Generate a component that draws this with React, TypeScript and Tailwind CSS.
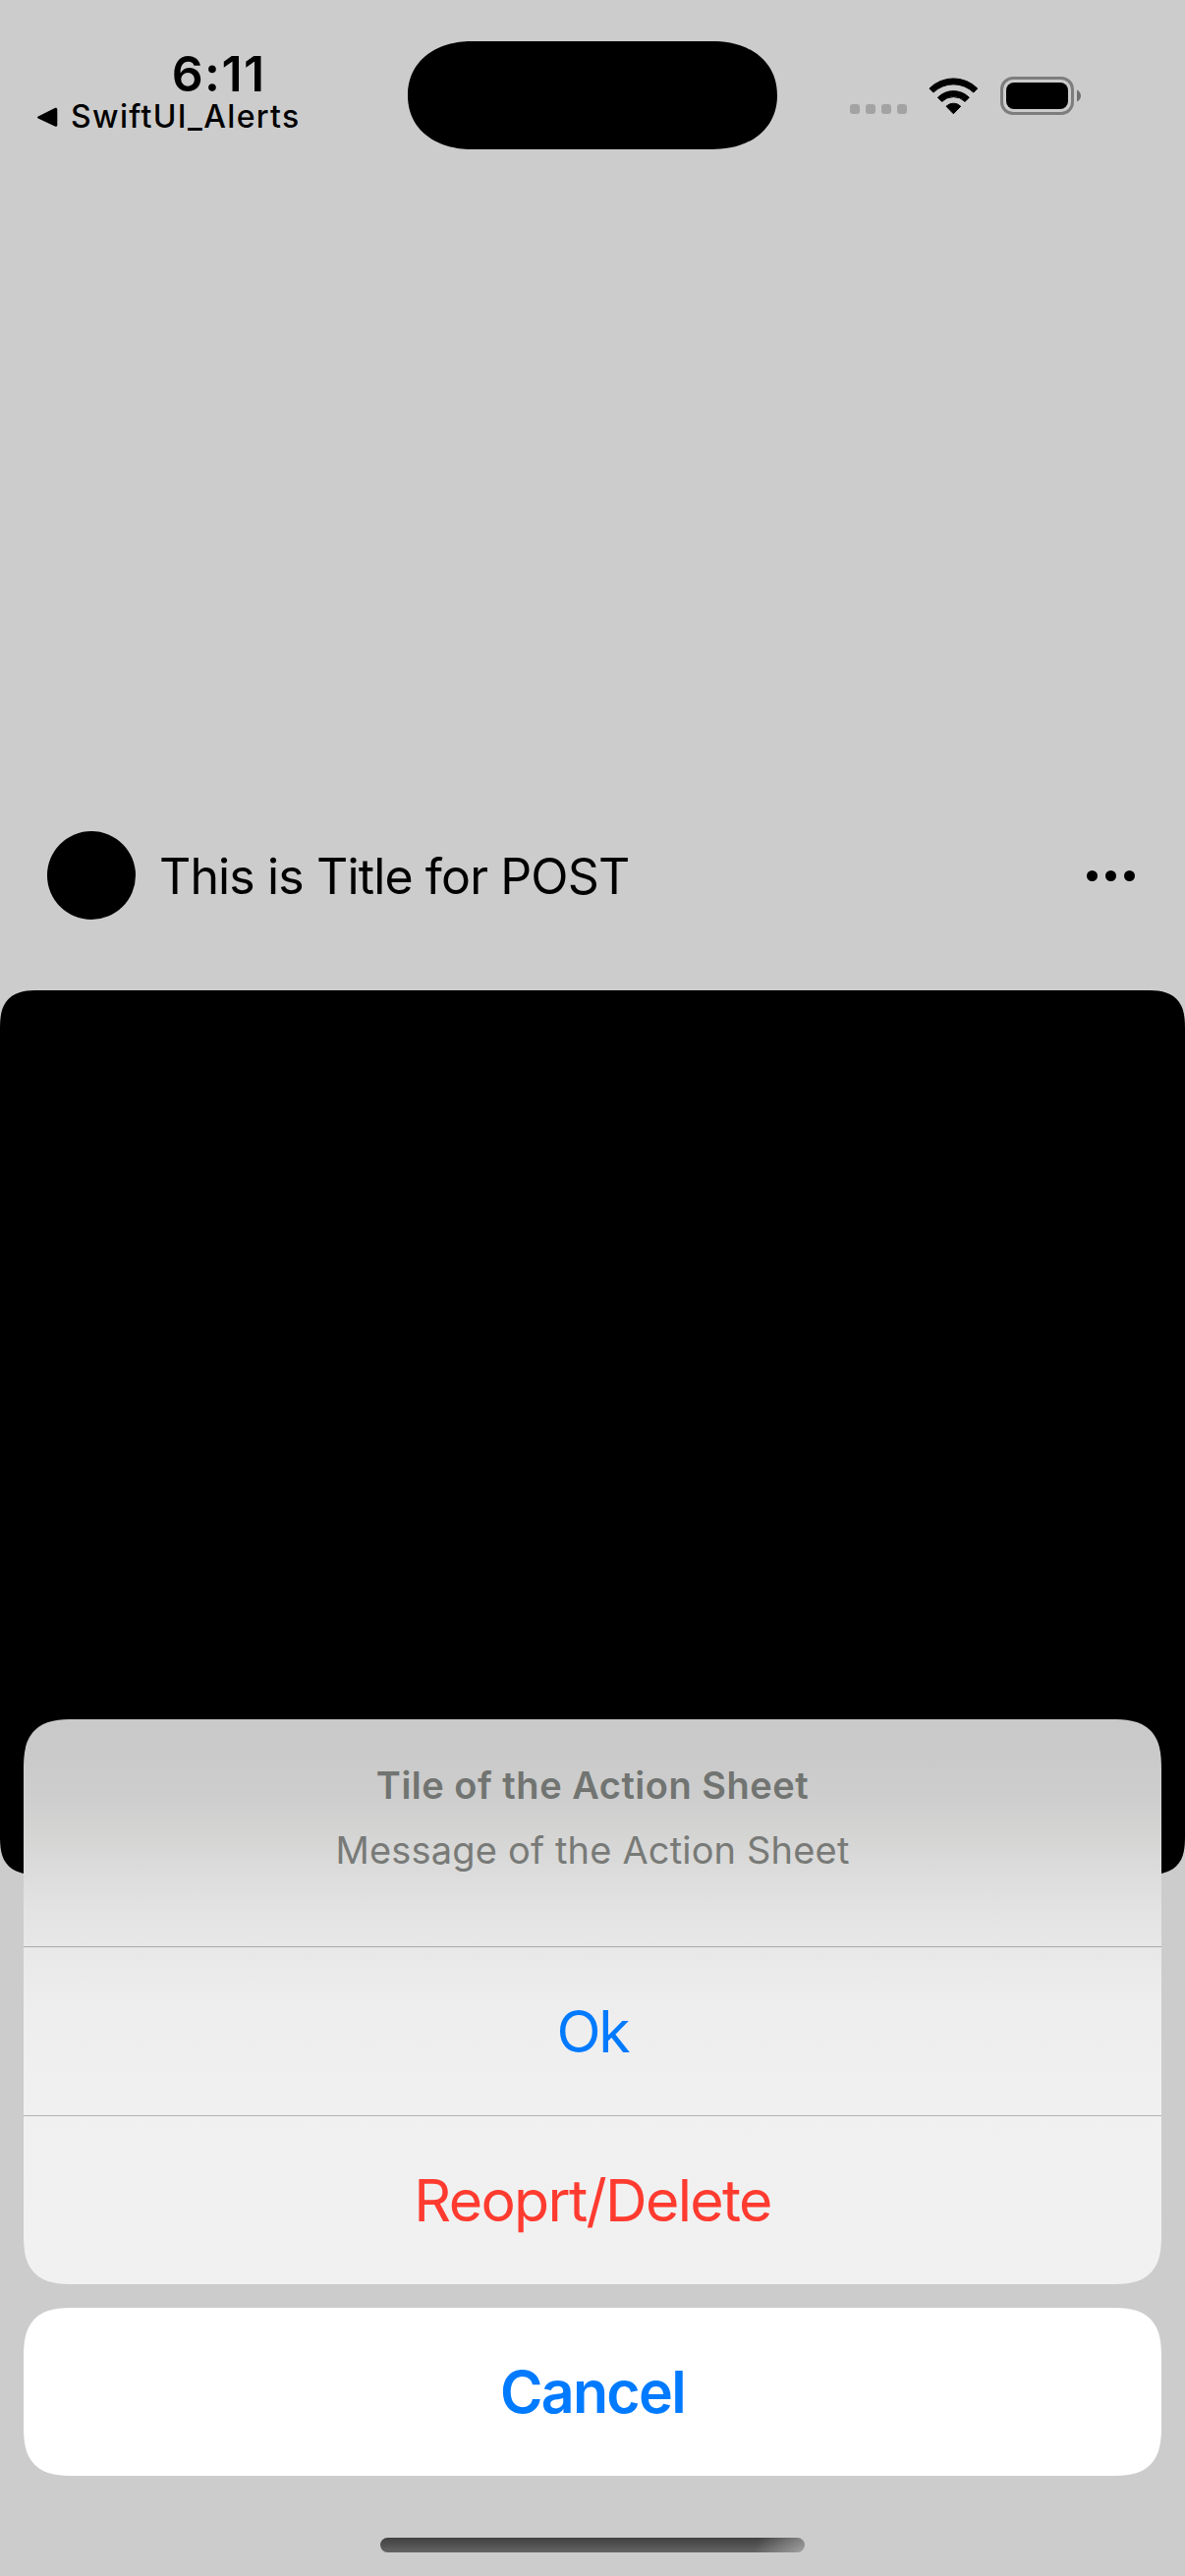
function BackTriangle() {
  return (
    <svg viewBox="0 0 21 21" className="h-[21px] w-[21px]" aria-hidden="true">
      <path
        d="M.8 9.4 17.8 1C19 .4 20.3 1 20.3 2.4v15.8c0 1.4-1.3 2-2.5 1.4L.8 11.6c-1-.5-1-1.7 0-2.2Z"
        fill="black"
      />
    </svg>
  );
}

function CellularDots() {
  return (
    <div className="flex gap-1.5 pt-[17px]">
      <span className="size-2.5 rounded-[3px] bg-[#a3a3a3]" />
      <span className="size-2.5 rounded-[3px] bg-[#a3a3a3]" />
      <span className="size-2.5 rounded-[3px] bg-[#a3a3a3]" />
      <span className="size-2.5 rounded-[3px] bg-[#a3a3a3]" />
    </div>
  );
}

function WifiIcon() {
  return (
    <svg viewBox="0 0 51 38" className="h-[38px] w-[51px]" aria-hidden="true">
      <g fill="black" stroke="black" strokeWidth="1" strokeLinejoin="round">
        <path d="M.9 11.1A34.4 34.4 0 0 1 49.8 11.1L45.8 15.1A29.5 29.5 0 0 0 4.9 15.1Z" />
        <path d="M9.4 20.2A22.6 22.6 0 0 1 41.3 20.2L37.1 24.4A16.8 16.8 0 0 0 13.6 24.4Z" />
        <path d="M18 29.2A10.4 10.4 0 0 1 32.7 29.2L25.35 36.8Z" />
      </g>
    </svg>
  );
}

function BatteryIcon() {
  return (
    <svg viewBox="0 0 83 39" className="h-[39px] w-[83px]" aria-hidden="true">
      <rect x="1.5" y="1.5" width="72" height="36" rx="11.5" fill="none" stroke="#7d7d7d" strokeWidth="3" />
      <rect x="6" y="6" width="63" height="27" rx="8" fill="black" />
      <path d="M78 13.4c2.4 1 4 3.4 4 6.1s-1.6 5.1-4 6.1Z" fill="#707070" />
    </svg>
  );
}

function StatusBar() {
  return (
    <header className="flex h-[160px] items-start">
      <div className="w-[414.5px] pt-[55px]">
        <p className="pl-[174.7px] text-[50px] leading-10 font-semibold tracking-[1.41px]">6:11</p>
        <div className="mt-1 flex h-10 items-center pl-[38px]">
          <BackTriangle />
          <span className="ml-[13px] text-[32px] leading-10 font-medium tracking-[1.34px]">SwiftUI_Alerts</span>
        </div>
      </div>
      <div className="mt-[41.5px] h-[110.5px] w-[376.5px] rounded-[66px/55px] bg-black [corner-shape:superellipse(1.12)]" />
      <div className="ml-[74px] flex items-start pt-[78px]">
        <div className="pt-[11px]">
          <CellularDots />
        </div>
        <div className="ml-[22px] pt-px">
          <WifiIcon />
        </div>
        <div className="ml-[22px]">
          <BatteryIcon />
        </div>
      </div>
    </header>
  );
}

function Post() {
  return (
    <main className="pt-[686px]">
      <div className="flex h-[90px] items-center px-12">
        <div className="size-[90px] rounded-full bg-black" />
        <h1 className="ml-6 pt-[2px] text-[50px] leading-[60px] tracking-[-0.87px]">This is Title for POST</h1>
        <button className="mr-[3.5px] ml-auto flex gap-[7.8px] pt-px" aria-label="More">
          <span className="size-[11px] rounded-full bg-black" />
          <span className="size-[11px] rounded-full bg-black" />
          <span className="size-[11px] rounded-full bg-black" />
        </button>
      </div>
      <div className="mt-[72px] h-[900px] rounded-[40px] bg-black [corner-shape:superellipse(1.5)]" />
    </main>
  );
}

function ActionSheet() {
  return (
    <div className="absolute inset-x-6 top-[1750px] text-center">
      <div className="overflow-hidden rounded-[52px] bg-[linear-gradient(180deg,#c9c9c9_0px,#cacaca_35px,#cdcdcd_75px,#d4d4d3_115px,#dbdbdb_150px,#e3e3e3_195px,#e8e8e8_235px,#ededed_285px,#efefef_340px,#f0f0f0_405px,#f1f1f1_575px)] [corner-shape:superellipse(1.5)]">
        <div className="h-[231px] pt-11">
          <h2 className="text-[38px] leading-[46px] font-semibold tracking-[0.51px] text-[#717471]">
            Tile of the Action Sheet
          </h2>
          <p className="mt-5 text-[38px] leading-[46px] tracking-[0.17px] text-[#787a77]">
            Message of the Action Sheet
          </p>
        </div>
        <div className="h-px bg-[#a9abaa]" />
        <button className="block h-[171px] w-full pt-0.5 text-[59px] tracking-[-2.2px] text-[#007aff]">Ok</button>
        <div className="h-px bg-[#b1b2b1]" />
        <button className="block h-[171px] w-full pt-0.5 text-[59px] tracking-[-1.71px] text-[#ff3b30]">
          Reoprt/Delete
        </button>
      </div>
      <button className="mt-6 block h-[171px] w-full rounded-[52px] bg-white pt-0.5 text-[59px] font-semibold tracking-[-1.67px] text-[#007aff] [corner-shape:superellipse(1.5)]">
        Cancel
      </button>
    </div>
  );
}

export default function App() {
  return (
    <div className="relative h-[2622px] w-[1206px] overflow-hidden bg-[#cccccc] font-[Inter,sans-serif] text-black">
      <StatusBar />
      <Post />
      <ActionSheet />
      <div className="absolute bottom-6 left-[387px] h-[15px] w-[432px] rounded-full bg-[linear-gradient(110deg,transparent_88%,rgba(255,255,255,0.4)_100%),linear-gradient(180deg,#404040,#646464)]" />
    </div>
  );
}
